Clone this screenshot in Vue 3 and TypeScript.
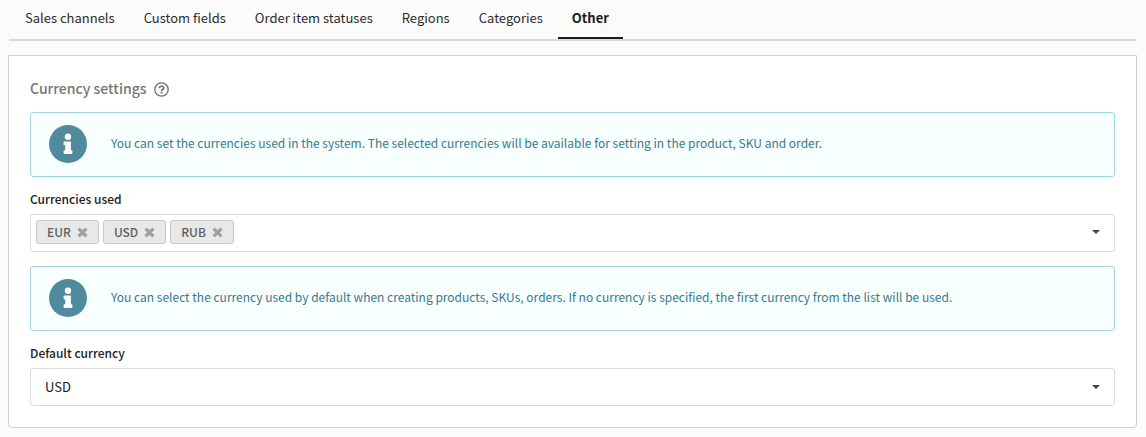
<script setup lang="ts">
import { ref } from 'vue'

const tabs: string[] = ['Sales channels', 'Custom fields', 'Order item statuses', 'Regions', 'Categories', 'Other']
const activeTab = ref<string>('Other')

const used = ref<string[]>(['EUR', 'USD', 'RUB'])
const search = ref<string>('')
const defaultCurrency = ref<string>('USD')

function remove(code: string): void {
  used.value = used.value.filter((c) => c !== code)
}
</script>

<template>
  <div class="page">
    <nav class="tabs">
      <a
        v-for="tab in tabs"
        :key="tab"
        href="#"
        class="tab"
        :class="{ active: tab === activeTab }"
        @click.prevent="activeTab = tab"
      >{{ tab }}</a>
    </nav>

    <main class="panel">
      <header class="heading">
        <h1 class="title">Currency settings</h1>
        <button type="button" class="help" aria-label="Help">
          <svg width="15" height="15" viewBox="0 0 15 15" fill="none" stroke="currentColor">
            <circle cx="7.5" cy="7.5" r="6.7" stroke-width="1.3" />
            <path d="M5.3 6.2C5.3 3.6 9.7 3.6 9.7 6C9.7 7.5 7.5 7.4 7.5 9" stroke-width="1.7" />
            <path d="M7.5 9.8V11.5" stroke-width="1.8" />
          </svg>
        </button>
      </header>

      <div class="notice">
        <svg class="info" width="38" height="38" viewBox="0 0 38 38">
          <circle cx="19" cy="19" r="19" fill="#508b9d" />
          <circle cx="19" cy="11.8" r="3.2" fill="#fff" />
          <path d="M15.4 16.4H21.2Q21.9 16.4 21.9 17.1V25.2H22.6Q23.4 25.2 23.4 26V28.2Q23.4 29 22.6 29H15.4Q14.6 29 14.6 28.2V26Q14.6 25.2 15.4 25.2H16.2V20.2H15.4Q14.6 20.2 14.6 19.4V17.2Q14.6 16.4 15.4 16.4Z" fill="#fff" />
        </svg>
        <p class="notice-text">You can set the currencies used in the system. The selected currencies will be available for setting in the product, SKU and order.</p>
      </div>

      <label class="label" for="currencies">Currencies used</label>
      <div class="field multi">
        <span v-for="code in used" :key="code" class="chip">
          {{ code }}
          <button type="button" class="remove" :aria-label="`Remove ${code}`" @click="remove(code)">
            <svg width="11" height="11" viewBox="0 0 11 11">
              <path d="M1.6 1.6L9.4 9.4M9.4 1.6L1.6 9.4" stroke="currentColor" stroke-width="3.2" />
            </svg>
          </button>
        </span>
        <input id="currencies" v-model="search" class="search" type="text" autocomplete="off" />
        <svg class="caret" width="8" height="4" viewBox="0 0 8 4"><path d="M0 0H8L4 4Z" fill="#444" /></svg>
      </div>

      <div class="notice">
        <svg class="info" width="38" height="38" viewBox="0 0 38 38">
          <circle cx="19" cy="19" r="19" fill="#508b9d" />
          <circle cx="19" cy="11.8" r="3.2" fill="#fff" />
          <path d="M15.4 16.4H21.2Q21.9 16.4 21.9 17.1V25.2H22.6Q23.4 25.2 23.4 26V28.2Q23.4 29 22.6 29H15.4Q14.6 29 14.6 28.2V26Q14.6 25.2 15.4 25.2H16.2V20.2H15.4Q14.6 20.2 14.6 19.4V17.2Q14.6 16.4 15.4 16.4Z" fill="#fff" />
        </svg>
        <p class="notice-text">You can select the currency used by default when creating products, SKUs, orders. If no currency is specified, the first currency from the list will be used.</p>
      </div>

      <label class="label" for="default-currency">Default currency</label>
      <div class="field single">
        <select id="default-currency" v-model="defaultCurrency" class="select">
          <option v-for="code in used" :key="code" :value="code">{{ code }}</option>
        </select>
        <svg class="caret" width="8" height="4" viewBox="0 0 8 4"><path d="M0 0H8L4 4Z" fill="#444" /></svg>
      </div>
    </main>
  </div>
</template>

<style>
body {
  background: #fbfbfb;
}
</style>

<style scoped>
.page {
  padding: 0 9px 9px 8px;
  font-family: "Noto Sans CJK SC", "Noto Sans", sans-serif;
  font-size: 13px;
  line-height: 20px;
  color: #212121;
}
.page * {
  box-sizing: border-box;
}
.tabs {
  display: flex;
  gap: 1px;
  margin: 0 1px 14px;
  padding-left: 2px;
  border-bottom: 2px solid #dadada;
}
.tab {
  padding: 8px 14px 9px;
  border-bottom: 2px solid transparent;
  color: #2b2b2b;
  text-decoration: none;
  white-space: nowrap;
}
.tab.active {
  border-bottom-color: #1b1b1b;
  color: #1b1b1b;
  font-weight: 700;
}
.panel {
  padding: 22px 21px 21px;
  background: #fff;
  border: 1px solid #d0d0d0;
  border-radius: 0 0 4px 4px;
}
.heading {
  display: flex;
  align-items: center;
  gap: 8px;
  margin-bottom: 14px;
}
.title {
  margin: 0;
  font-size: 14px;
  font-weight: 500;
  line-height: 20px;
  color: #757575;
}
.help {
  display: flex;
  padding: 3px 0 0;
  border: 0;
  background: none;
  color: #6e6e6e;
}
.notice {
  display: flex;
  align-items: center;
  gap: 24px;
  min-height: 65px;
  padding: 11px 18px 13px;
  background: #f7ffff;
  border: 1px solid #9fd5de;
  border-radius: 3px;
}
.info {
  flex: none;
}
.notice-text {
  margin: 0;
  padding-bottom: 2px;
  font-size: 12px;
  color: #37798f;
}
.label {
  display: block;
  margin: 12px 0 5px;
  font-size: 12px;
  font-weight: 500;
}
.field {
  display: flex;
  align-items: center;
  min-height: 38px;
  background: #fff;
  border: 1px solid #dcdcdc;
  border-radius: 3px;
}
.multi {
  gap: 4px;
  padding: 0 14px 2px 5px;
  margin-bottom: 14px;
}
.chip {
  display: flex;
  align-items: center;
  gap: 6px;
  height: 24px;
  padding: 0 10px;
  background: #e8e8e8;
  border: 1px solid #c8c8c8;
  border-radius: 3px;
  font-size: 12px;
  font-weight: 500;
  color: #5f5f5f;
}
.remove {
  display: flex;
  padding: 0;
  border: 0;
  background: none;
  color: #a0a0a0;
}
.search {
  flex: 1;
  min-width: 0;
  border: 0;
  outline: 0;
  background: none;
  font: inherit;
}
.single {
  display: grid;
  align-items: stretch;
}
.select {
  grid-area: 1 / 1;
  appearance: none;
  padding: 0 14px;
  border: 0;
  background: none;
  font: inherit;
  color: inherit;
}
.single .caret {
  grid-area: 1 / 1;
  place-self: center end;
  margin-right: 14px;
  pointer-events: none;
}
</style>
